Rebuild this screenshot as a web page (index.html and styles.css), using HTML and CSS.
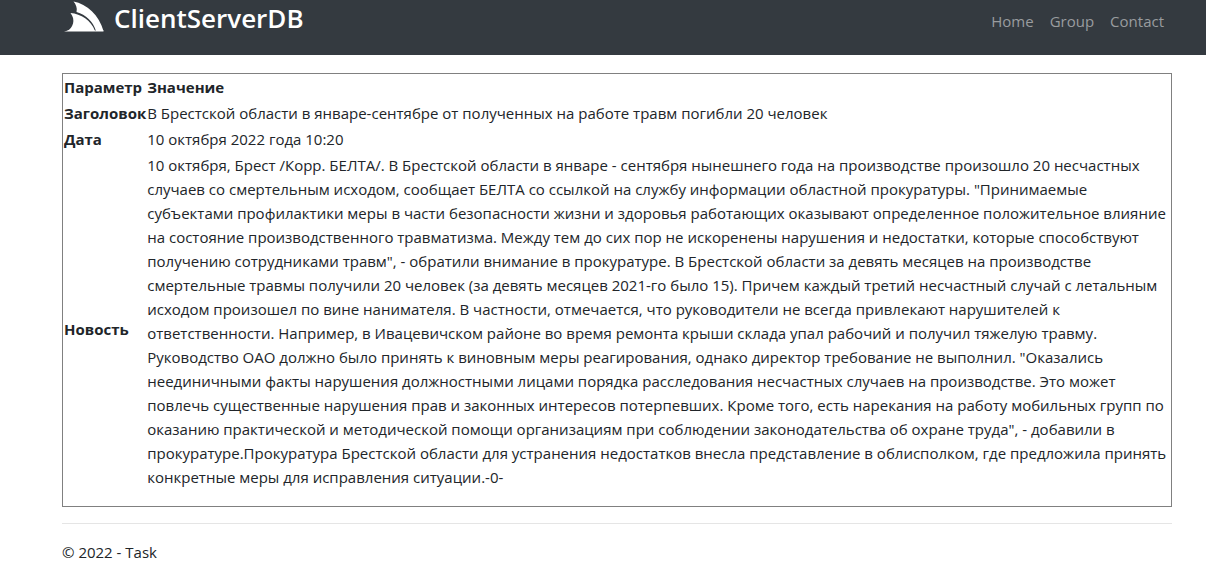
FILE: index.html
```html
<!DOCTYPE html>
<html lang="ru">
<head>
<meta charset="utf-8">
<title>ClientServerDB</title>
<link rel="stylesheet" href="styles.css">
</head>
<body>
<header class="navbar">
  <a class="brand" href="#">
    <svg class="logo" viewBox="0 0 40 32" aria-hidden="true">
      <path d="M9.500 1.500C23 4 35 15 39.500 31H32C29 21 22 15 12.500 12C13.500 8 12 4.500 9.500 1.500Z"/>
      <path d="M6.500 13C17 14 27 20 31 31H3C9 28 12 20 6.500 13Z"/>
      <path d="M0 31.500L4 30.500H39.500V31.500Z"/>
    </svg>
    <span>ClientServerDB</span>
  </a>
  <nav class="links">
    <a href="#">Home</a>
    <a href="#">Group</a>
    <a href="#">Contact</a>
  </nav>
</header>
<main class="container">
  <table class="news">
    <thead>
      <tr><th class="param" scope="col">Параметр</th><th scope="col">Значение</th></tr>
    </thead>
    <tbody>
      <tr><th class="param" scope="row">Заголовок</th><td>В Брестской области в январе-сентябре от полученных на работе травм погибли 20 человек</td></tr>
      <tr><th class="param" scope="row">Дата</th><td>10 октября 2022 года 10:20</td></tr>
      <tr><th class="param" scope="row">Новость</th><td><p class="article">10 октября, Брест /Корр. БЕЛТА/. В Брестской области в январе - сентября нынешнего года на производстве произошло 20 несчастных<br>
случаев со смертельным исходом, сообщает БЕЛТА со ссылкой на службу информации областной прокуратуры. "Принимаемые<br>
субъектами профилактики меры в части безопасности жизни и здоровья работающих оказывают определенное положительное влияние<br>
на состояние производственного травматизма. Между тем до сих пор не искоренены нарушения и недостатки, которые способствуют<br>
получению сотрудниками травм", - обратили внимание в прокуратуре. В Брестской области за девять месяцев на производстве<br>
смертельные травмы получили 20 человек (за девять месяцев 2021-го было 15). Причем каждый третий несчастный случай с летальным<br>
исходом произошел по вине нанимателя. В частности, отмечается, что руководители не всегда привлекают нарушителей к<br>
ответственности. Например, в Ивацевичском районе во время ремонта крыши склада упал рабочий и получил тяжелую травму.<br>
Руководство ОАО должно было принять к виновным меры реагирования, однако директор требование не выполнил. "Оказались<br>
неединичными факты нарушения должностными лицами порядка расследования несчастных случаев на производстве. Это может<br>
повлечь существенные нарушения прав и законных интересов потерпевших. Кроме того, есть нарекания на работу мобильных групп по<br>
оказанию практической и методической помощи организациям при соблюдении законодательства об охране труда", - добавили в<br>
прокуратуре.Прокуратура Брестской области для устранения недостатков внесла представление в облисполком, где предложила принять<br>
конкретные меры для исправления ситуации.-0-</p></td></tr>
    </tbody>
  </table>
</main>
<footer class="footer">© 2022 - Task</footer>
</body>
</html>
```
FILE: styles.css
```css
* { box-sizing: border-box; }
body {
  margin: 0;
  background: #fff;
  color: #212529;
  font: 15px/24px "Open Sans", "Noto Sans", sans-serif;
}
.navbar {
  display: flex;
  justify-content: space-between;
  align-items: flex-start;
  height: 55px;
  padding: 0 42px 0 64px;
  background: #343a40;
}
.brand {
  display: flex;
  align-items: flex-start;
  gap: 10px;
  color: #fff;
  font-size: 26px;
  font-weight: 600;
  line-height: 36px;
  text-decoration: none;
}
.logo { width: 40px; height: 32px; fill: #fff; }
.links { display: flex; gap: 16px; padding-top: 9px; }
.links a { color: #999c9f; text-decoration: none; }
.container { margin: 18px 34px 16px 62px; }
.news {
  width: 100%;
  border: 1px solid #808080;
  border-collapse: collapse;
}
.news th, .news td { padding: 1px; text-align: left; }
.news .param { width: 82px; padding-right: 0; }
.article { margin: 0 0 16px; white-space: nowrap; }
.footer {
  margin: 0 34px 0 62px;
  padding-top: 16px;
  border-top: 1px solid #e5e5e5;
}
```
